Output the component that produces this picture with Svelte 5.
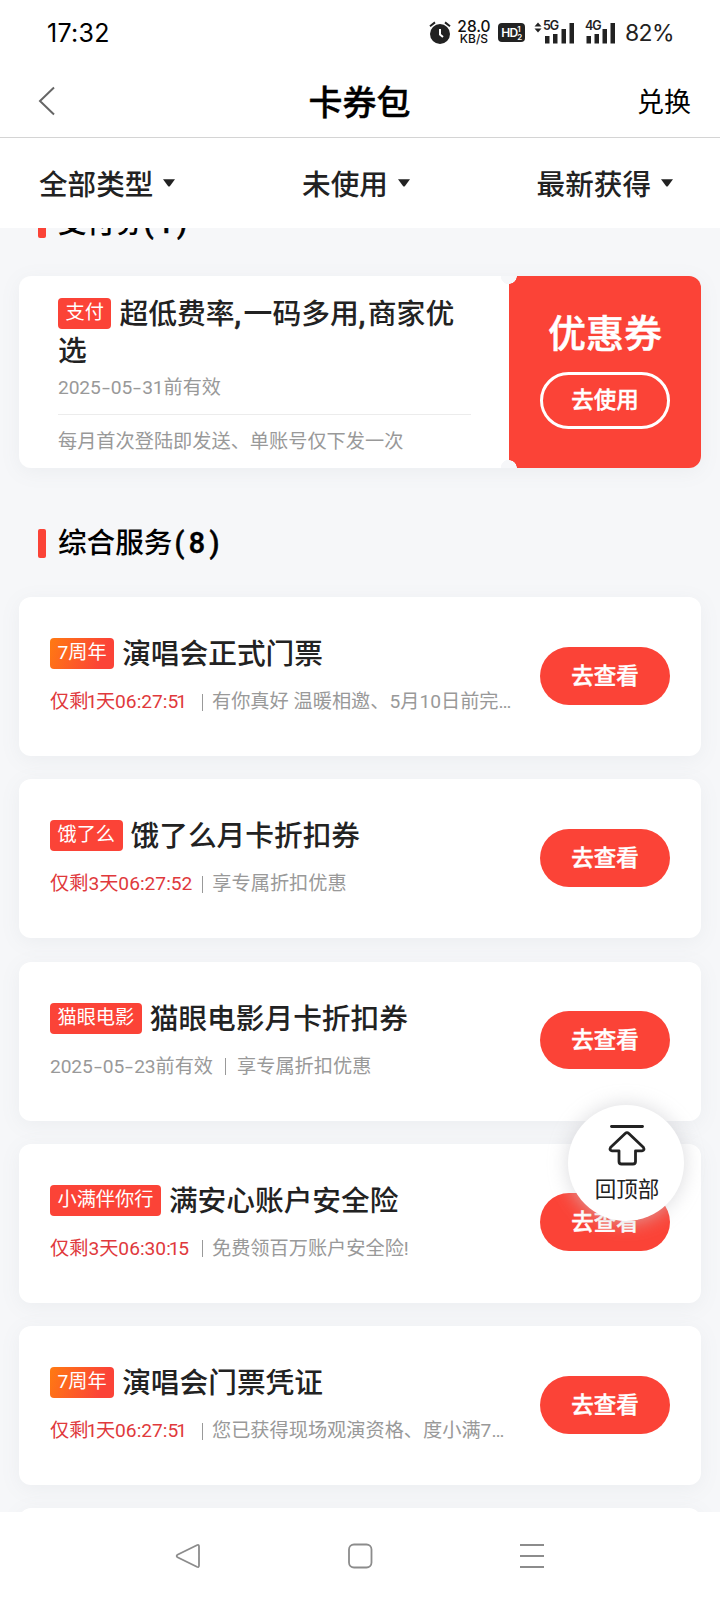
<script>
    const filters = ['全部类型', '未使用', '最新获得'];

    const coupons = [
        { tag: '7周年', hot: true, title: '演唱会正式门票', left: '1天', time: '06:27:51', desc: '有你真好 温暖相邀、5月10日前完成领取' },
        { tag: '饿了么', title: '饿了么月卡折扣券', left: '3天', time: '06:27:52', desc: '享专属折扣优惠' },
        { tag: '猫眼电影', title: '猫眼电影月卡折扣券', date: '2025-05-23', desc: '享专属折扣优惠' },
        { tag: '小满伴你行', title: '满安心账户安全险', left: '3天', time: '06:30:15', desc: '免费领百万账户安全险!' },
        { tag: '7周年', hot: true, title: '演唱会门票凭证', left: '1天', time: '06:27:51', desc: '您已获得现场观演资格、度小满7周年' }
    ];

    let active = $state(0);
    let list;

    function toTop() {
        list.scrollTo({ top: 0, behavior: 'smooth' });
    }
</script>

<!-- the figure 1 is set tighter than the other digits -->
{#snippet digits(text)}{#each text.split('1') as part, i}{#if i}<span class="one">1</span>{/if}{part}{/each}{/snippet}

<div class="screen">
    <div class="status">
        <span class="clock">17:32</span>
        <div class="status-right">
            <svg class="alarm" width="22" height="24" viewBox="0 0 22 24">
                <circle cx="11" cy="13" r="10" fill="#222" />
                <path d="M1 5.2 L6 1.4 M21 5.2 L16 1.4" stroke="#222" stroke-width="2" fill="none" />
                <path d="M11 8 V13.5 L14 16" stroke="#fff" stroke-width="2" fill="none" />
            </svg>
            <div class="speed"><b>28.0</b><span>KB/S</span></div>
            <div class="hd"><span>HD</span><i><em>1</em><em>2</em></i></div>
            <div class="signal five">
                <svg width="41" height="22" viewBox="0 0 41 22">
                    <path d="M0.5 4.5 L4 0.5 L7.5 4.5z M0.5 6.5 L4 10.5 L7.5 6.5z" fill="#222" />
                    <path d="M11 14h4.500v7.500h-4.500z M19 12h4.500v9.500h-4.500z M27.500 7h4.500v14.500h-4.500z M35.500 1h4.500v20.500h-4.500z" fill="#222" />
                </svg>
                <span>5G</span>
            </div>
            <div class="signal four">
                <svg width="31" height="22" viewBox="0 0 31 22">
                    <path d="M1.500 14h4.500v7.500h-4.500z M9.500 12h4.500v9.500h-4.500z M17.500 7h4.500v14.500h-4.500z M25.500 1h4.500v20.500h-4.500z" fill="#222" />
                </svg>
                <span>4G</span>
            </div>
            <span class="battery">82%</span>
        </div>
    </div>

    <header class="header">
        <svg class="back" width="18" height="30" viewBox="0 0 18 30">
            <path d="M16 1.500 L2 15 L16 28.500" fill="none" stroke="#666" stroke-width="2" />
        </svg>
        <h1>卡券包</h1>
        <span class="exchange">兑换</span>
    </header>

    <div class="filters">
        {#each filters as name, i}
            <div class="filter" class:active={active === i} onclick={() => (active = i)} role="button" tabindex="-1" onkeydown={() => {}}>
                {name}
                <svg width="12" height="8" viewBox="0 0 12 8"><path d="M0 0.300 H12 L7 6.900 Q6 8 5 6.900z" fill="#222" /></svg>
            </div>
        {/each}
    </div>

    <main class="list" bind:this={list}>
        <div class="section first"><i></i>支付券<span class="count">(1)</span></div>

        <div class="ticket">
            <div class="ticket-main">
                <div class="ticket-title"><span class="tag">支付</span>超低费率<span class="comma">,</span>一码多用<span class="comma">,</span>商家优选</div>
                <div class="ticket-date"><span class="date">2025<s>-</s>05<s>-</s>31</span>前有效</div>
                <div class="ticket-note">每月首次登陆即发送、单账号仅下发一次</div>
            </div>
            <div class="ticket-side">
                <strong>优惠券</strong>
                <span class="use">去使用</span>
            </div>
        </div>

        <div class="section"><i></i>综合服务<span class="count">(8)</span></div>

        {#each coupons as c}
            <div class="card">
                <div class="info">
                    <div class="title"><span class="tag" class:hot={c.hot}>{c.tag}</span>{c.title}</div>
                    <div class="sub">
                        {#if c.date}
                            <span class="expire">
                                <span class="date">{#each c.date.split('-') as part, i}{#if i}<s>-</s>{/if}{part}{/each}</span>前有效
                            </span>
                        {:else}
                            <span class="remain">仅剩{@render digits(c.left + c.time)}</span>
                        {/if}
                        <i class="bar"></i>
                        <span class="desc">{c.desc}</span>
                    </div>
                </div>
                <span class="view">去查看</span>
            </div>
        {/each}
        <div class="card"></div>
    </main>

    <nav class="nav">
        <svg width="26" height="26" viewBox="0 0 26 26">
            <path d="M21.800 2.200 Q24 1.200 24 3.400 V22.600 Q24 24.800 21.800 23.800 L2.500 14.300 Q0.800 13 2.500 11.700z" />
        </svg>
        <svg width="26" height="26" viewBox="0 0 26 26">
            <rect x="2" y="1.500" width="22.500" height="23" rx="5" />
        </svg>
        <svg width="26" height="26" viewBox="0 0 26 26">
            <path d="M1 2H25 M1 13H25 M1 24H25" />
        </svg>
    </nav>

    <button class="top" onclick={toTop}>
        <svg width="38" height="42" viewBox="0 0 38 42">
            <path d="M3.500 2.500H34.500" />
            <path d="M17.200 9.500 Q19 7.800 20.800 9.500 L35.300 23.200 Q37 26.500 34 26.800 H27.500 V37.500 Q27.500 40 25 40 H13.500 Q11 40 11 37.500 V26.800 H4 Q1 26.500 2.700 23.200z" />
        </svg>
        回顶部
    </button>
</div>

<style>
    :global(body) {
        margin: 0;
        background: #fff;
    }

    .screen {
        position: relative;
        display: flex;
        flex-direction: column;
        width: 720px;
        height: 1600px;
        overflow: hidden;
        background: #fff;
        color: #222;
        font-family: Roboto, "Noto Sans CJK SC", sans-serif;
    }

    /* status bar */
    .status {
        display: flex;
        align-items: center;
        justify-content: space-between;
        box-sizing: border-box;
        height: 64px;
        padding: 1px 46px 0 47px;
    }

    .clock {
        color: #000;
        font-size: 25px;
        line-height: 30px;
        letter-spacing: 0.3px;
        font-family: Inter, sans-serif;
    }

    .status-right {
        display: flex;
        align-items: center;
        font-family: Inter, sans-serif;
    }

    .speed {
        display: flex;
        flex-direction: column;
        align-items: center;
        width: 32px;
        margin-left: 7px;
        color: #111;
        font-size: 12px;
        line-height: 12px;
    }

    .speed b {
        font-size: 15.500px;
        font-weight: 500;
        line-height: 13px;
    }

    .speed span {
        font-weight: 500;
    }

    .hd {
        display: flex;
        align-items: center;
        justify-content: center;
        width: 27px;
        height: 19px;
        margin-left: 8px;
        border-radius: 4px;
        background: #222;
        color: #fff;
        font-size: 12px;
        font-weight: 600;
        letter-spacing: -0.8px;
    }

    .hd i {
        display: flex;
        flex-direction: column;
        font-size: 8px;
        line-height: 8px;
    }

    .hd em {
        font-style: normal;
    }

    .signal {
        position: relative;
        height: 22px;
        margin-left: 9px;
    }

    .signal.four {
        margin-left: 10px;
    }

    .signal span {
        position: absolute;
        top: -3px;
        left: 0;
        color: #222;
        font: 600 12.5px/14px Inter, sans-serif;
        letter-spacing: -1px;
        text-shadow: 1px 1px 0 #fff;
    }

    .signal.five span {
        left: 9px;
    }

    .battery {
        margin-left: 9px;
        font-size: 23px;
        line-height: 30px;
        letter-spacing: -0.6px;
    }

    /* header */
    .header {
        display: flex;
        align-items: center;
        justify-content: space-between;
        box-sizing: border-box;
        height: 74px;
        padding: 0 29px 0 37px;
        border-bottom: 1px solid #d4d4d4;
    }

    .back {
        width: 54px;
        height: 30px;
        margin-right: -9px;
    }

    .back path {
        transform: translateX(-17px);
    }

    h1 {
        margin: 0;
        padding-top: 4px;
        color: #000;
        font-size: 34px;
        font-weight: 500;
        line-height: 40px;
        -webkit-text-stroke: 0.4px #000;
    }

    .exchange {
        padding-top: 4px;
        color: #000;
        font-size: 27px;
        line-height: 36px;
    }

    .filters {
        display: flex;
        align-items: center;
        justify-content: space-between;
        box-sizing: border-box;
        height: 90px;
        padding: 4px 47px 0 39px;
    }

    .filter {
        display: flex;
        align-items: center;
        gap: 10px;
        font-size: 28.600px;
        font-weight: 500;
        line-height: 40px;
        cursor: pointer;
    }

    .filter svg {
        margin-bottom: 4px;
    }

    /* list */
    .list {
        flex: 1;
        min-height: 0;
        overflow: hidden;
        padding: 0 19px;
        background: #f6f7f9;
    }

    .section {
        display: flex;
        align-items: center;
        height: 40px;
        margin: 55px 0 34px;
        padding-left: 19px;
        color: #000;
        font-size: 28.600px;
        font-weight: 500;
        line-height: 40px;
    }

    .section.first {
        margin-top: -25px;
        margin-bottom: 33px;
    }

    .section i {
        width: 8px;
        height: 29px;
        margin-right: 12px;
        border-radius: 2px;
        background: #fb4337;
    }

    .count {
        padding-left: 2px;
        letter-spacing: 4.500px;
        -webkit-text-stroke: 0.5px #000;
    }

    .section.first .count {
        padding-left: 0;
        letter-spacing: 3.500px;
    }

    .tag {
        display: inline-block;
        box-sizing: border-box;
        height: 31px;
        padding: 0 7.500px;
        margin-right: 8px;
        border-radius: 4px;
        background: #fb4337;
        color: #fff;
        font-size: 19.200px;
        font-weight: 400;
        line-height: 29px;
        vertical-align: 5px;
    }

    .tag.hot {
        background: linear-gradient(110deg, #ff7a12, #fb4337 80%);
    }

    .date {
        letter-spacing: -0.1px;
    }

    .date s {
        display: inline-block;
        width: 10px;
        text-align: center;
        text-decoration: none;
        transform: scaleX(1.5);
    }

    .one {
        margin: 0 -1.300px 0 -2px;
    }

    .ticket {
        display: flex;
        height: 192px;
        border-radius: 12px;
        box-shadow: 0 4px 20px rgba(120, 125, 140, 0.08);
    }

    .ticket-main {
        box-sizing: border-box;
        width: 490px;
        padding: 20px 38px 0 39px;
        border-radius: 12px 0 0 12px;
        background: radial-gradient(circle at 100% 0, transparent 8px, #fff 8.500px) top / 100% 50% no-repeat,
            radial-gradient(circle at 100% 100%, transparent 8px, #fff 8.500px) bottom / 100% 50% no-repeat;
    }

    .ticket-title {
        font-size: 28.800px;
        font-weight: 500;
        line-height: 37px;
    }

    .ticket-title .tag {
        margin-top: -3px;
        margin-bottom: -4px;
    }

    .comma {
        display: inline-block;
        width: 9px;
        -webkit-text-stroke: 0.6px #222;
    }

    .ticket-date,
    .ticket-note {
        color: #999;
        font-size: 19.200px;
        line-height: 28px;
    }

    .ticket-date {
        padding: 4px 0 12px;
        border-bottom: 1px solid #ececec;
    }

    .ticket-note {
        padding-top: 13px;
    }

    .ticket-side {
        display: flex;
        flex-direction: column;
        align-items: center;
        flex: 1;
        padding-top: 35px;
        border-radius: 0 12px 12px 0;
        background: radial-gradient(circle at 0 0, transparent 7.500px, #fb4337 8px) top / 100% 50% no-repeat,
            radial-gradient(circle at 0 100%, transparent 7.500px, #fb4337 8px) bottom / 100% 50% no-repeat;
        color: #fff;
    }

    .ticket-side strong {
        font-size: 38px;
        font-weight: 500;
        line-height: 46px;
        -webkit-text-stroke: 0.5px #fff;
    }

    .use {
        box-sizing: border-box;
        width: 130px;
        height: 57px;
        margin-top: 15px;
        border: 3px solid #fff;
        border-radius: 29px;
        font-size: 22.500px;
        font-weight: 500;
        line-height: 51px;
        text-align: center;
        -webkit-text-stroke: 0.4px #fff;
    }

    .card {
        display: flex;
        align-items: center;
        box-sizing: border-box;
        height: 159px;
        margin-bottom: 23.300px;
        padding: 0 31px;
        border-radius: 12px;
        background: #fff;
        box-shadow: 0 4px 20px rgba(120, 125, 140, 0.08);
    }

    .info {
        width: 490px;
        padding-bottom: 3px;
    }

    .title {
        height: 40px;
        font-size: 28.700px;
        font-weight: 500;
        line-height: 40px;
        white-space: nowrap;
    }

    .sub {
        display: flex;
        align-items: center;
        width: 466px;
        margin-top: 14px;
        color: #999;
        font-size: 19.200px;
        line-height: 28px;
        white-space: nowrap;
    }

    .remain {
        min-width: 142px;
        color: #e0393c;
    }

    .expire {
        padding-right: 2px;
    }

    .expire + .bar {
        margin-right: 11px;
    }

    .bar {
        flex: none;
        width: 1px;
        height: 17px;
        margin: 0 9px 0 10px;
        background: #999;
    }

    .desc {
        overflow: hidden;
        text-overflow: ellipsis;
    }

    .view {
        flex: none;
        width: 130px;
        height: 58px;
        margin-bottom: 2px;
        border-radius: 29px;
        background: #fb4337;
        color: #fff;
        font-size: 22.500px;
        font-weight: 500;
        line-height: 59px;
        text-align: center;
        -webkit-text-stroke: 0.4px #fff;
    }

    /* system navigation */
    .nav {
        display: flex;
        align-items: center;
        justify-content: space-between;
        box-sizing: border-box;
        height: 88px;
        padding: 0 175px;
        background: #fff;
    }

    .nav svg {
        fill: none;
        stroke: #8c8c8c;
        stroke-width: 1.800;
    }

    .top {
        position: absolute;
        top: 1105px;
        left: 568px;
        display: flex;
        flex-direction: column;
        align-items: center;
        width: 116px;
        height: 116px;
        padding: 19px 0 0 2px;
        border: 0;
        border-radius: 50%;
        background: #fff;
        box-shadow: 0 0 20px rgba(205, 205, 210, 0.75);
        color: #222;
        font: 400 21.500px/30px Roboto, "Noto Sans CJK SC", sans-serif;
        cursor: pointer;
    }

    .top svg {
        margin-bottom: 9px;
        fill: none;
        stroke: #222;
        stroke-width: 2.800;
        stroke-linecap: round;
        stroke-linejoin: round;
    }
</style>
